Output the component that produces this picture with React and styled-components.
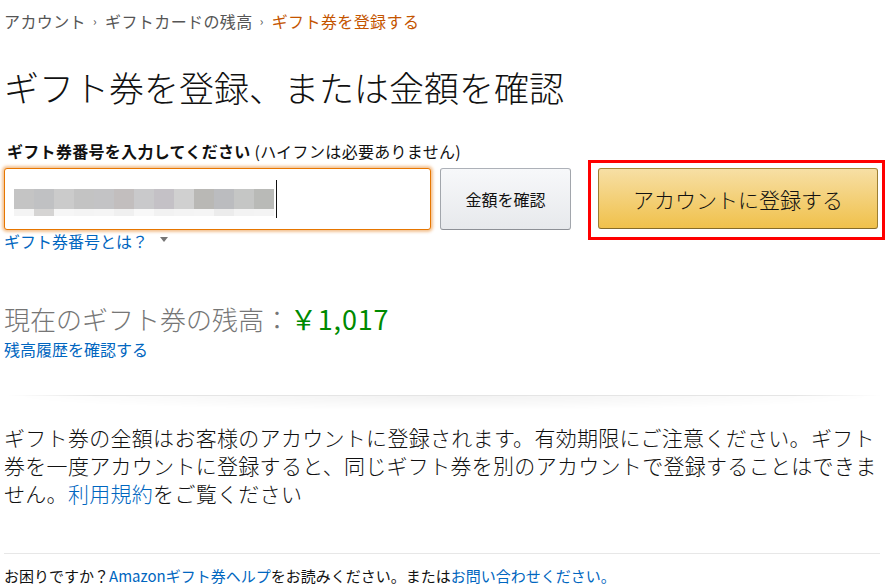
import React from "react";
import styled, { createGlobalStyle } from "styled-components";

const GlobalStyle = createGlobalStyle`
	body {
		margin: 0;
		background: #fff;
		font-family: "Noto Sans CJK JP", "Noto Sans", sans-serif;
		color: #111;
	}
`;

const breadcrumbs = [
	{ name: "アカウント" },
	{ name: "ギフトカードの残高" },
	{ name: "ギフト券を登録する", active: true },
];

const blurBlocks = [
	["#c4c4c4", "#f4f4f4"],
	["#c0c1c3", "#d5d4d3"],
	["#cbcbcb", "#f6f6f6"],
	["#c3c3c3", "#f4f4f4"],
	["#c3c3c5", "#f5f5f5"],
	["#c2bebe", "#f0f0f0"],
	["#c9c9cb", "#f8f8f8"],
	["#c4c1c6", "#f2f2f2"],
	["#d0d0d0", "#f4f4f4"],
	["#b9b8b5", "#f5f5f5"],
	["#bbbcbf", "#ececec"],
	["#c5c6c5", "#f3f3f3"],
	["#b9bab7", "#f4f4f4"],
];

const App = () => {
	return (
		<>
			<GlobalStyle />
			<StyledPage>
				<StyledBreadcrumbs>
					{breadcrumbs.map((item, i) => (
						<React.Fragment key={item.name}>
							{i > 0 && <StyledCrumbSep>›</StyledCrumbSep>}
							<StyledCrumb $active={item.active}>{item.name}</StyledCrumb>
						</React.Fragment>
					))}
				</StyledBreadcrumbs>

				<StyledTitle>ギフト券を登録、または金額を確認</StyledTitle>

				<StyledLabel>
					<b>ギフト券番号を入力してください</b> (ハイフンは必要ありません)
				</StyledLabel>

				<StyledFormRow>
					<StyledInputBox>
						<StyledBlur>
							{blurBlocks.map(([top, bottom], i) => (
								<StyledBlurCell key={i}>
									<StyledBlurTop $color={top} />
									<StyledBlurBottom $color={bottom} />
								</StyledBlurCell>
							))}
						</StyledBlur>
						<StyledCaret />
					</StyledInputBox>
					<StyledCheckButton>金額を確認</StyledCheckButton>
					<StyledHighlight>
						<StyledPrimaryButton>アカウントに登録する</StyledPrimaryButton>
					</StyledHighlight>
				</StyledFormRow>

				<StyledHelpLink>
					<StyledLink>ギフト券番号とは？</StyledLink>
					<StyledCaretDown />
				</StyledHelpLink>

				<StyledBalance>
					現在のギフト券の残高：<StyledAmount>￥1,017</StyledAmount>
				</StyledBalance>
				<StyledHistoryLink>残高履歴を確認する</StyledHistoryLink>

				<StyledSectionDivider />

				<StyledNotice>
					ギフト券の全額はお客様のアカウントに登録されます。有効期限にご注意ください。ギフト券を一度アカウントに登録すると、同じギフト券を別のアカウントで登録することはできません。<StyledLink>利用規約</StyledLink>をご覧ください
				</StyledNotice>

				<StyledRule />

				<StyledFooterText>
					お困りですか？<StyledLink>Amazonギフト券ヘルプ</StyledLink>
					をお読みください。または<StyledLink>お問い合わせください。</StyledLink>
				</StyledFooterText>
			</StyledPage>
		</>
	);
};

const StyledPage = styled.div`
	width: 889px;
	padding: 9px 4px 0 4px;
	box-sizing: border-box;
`;

const StyledBreadcrumbs = styled.div`
	display: flex;
	align-items: center;
	font-size: 16px;
	letter-spacing: 0.4px;
	line-height: 24px;
`;

const StyledCrumb = styled.span`
	color: ${({ $active }) => ($active ? "#c45500" : "#555")};
`;

const StyledCrumbSep = styled.span`
	color: #555;
	font-size: 12px;
	margin: 0 8px 0 7px;
`;

const StyledTitle = styled.h1`
	margin: 32px 0 0 0;
	font-size: 35px;
	font-weight: 300;
	line-height: 44px;
	color: #111;
`;

const StyledLabel = styled.div`
	margin: 31px 0 0 3px;
	font-size: 16px;
	letter-spacing: 0.3px;
	line-height: 22px;
	b {
		font-weight: 700;
	}
`;

const StyledFormRow = styled.div`
	display: flex;
	align-items: flex-start;
	margin: 6px 0 0 0;
`;

const StyledInputBox = styled.div`
	width: 428px;
	height: 62px;
	box-sizing: border-box;
	border: 1px solid #e77600;
	border-radius: 3px;
	box-shadow: 0 0 3px 2px rgba(228, 121, 17, 0.45);
	display: flex;
	align-items: center;
	padding: 0 0 0 9px;
	background: #fff;
`;

const StyledBlur = styled.div`
	display: flex;
	height: 27px;
	margin: 6px 0 0 0;
`;

const StyledBlurCell = styled.div`
	width: 20px;
	display: flex;
	flex-direction: column;
`;

const StyledBlurTop = styled.div`
	height: 20px;
	background: ${({ $color }) => $color};
`;

const StyledBlurBottom = styled.div`
	height: 7px;
	background: ${({ $color }) => $color};
`;

const StyledCaret = styled.div`
	width: 1px;
	height: 38px;
	background: #111;
	margin: 0 0 0 2px;
`;

const StyledCheckButton = styled.button`
	width: 131px;
	height: 62px;
	margin: 0 0 0 9px;
	border: 1px solid #adb1b8;
	border-color: #adb1b8 #a2a6ac #8d9096;
	border-radius: 3px;
	background: linear-gradient(to bottom, #f7f8fa, #e7e9ec);
	font-family: inherit;
	font-size: 16px;
	color: #111;
	padding: 0;
`;

const StyledHighlight = styled.div`
	margin: -8px 0 -10px 17px;
	border: 3px solid #ff0000;
	padding: 5px 4px 8px 7px;
`;

const StyledPrimaryButton = styled.button`
	display: block;
	width: 280px;
	height: 61px;
	border: 1px solid #a88734;
	border-color: #a88734 #9c7e31 #846a29;
	border-radius: 3px;
	background: linear-gradient(to bottom, #f7dfa5, #f0c14b);
	font-family: inherit;
	font-size: 21px;
	font-weight: 300;
	color: #111;
	padding: 0;
`;

const StyledHelpLink = styled.div`
	display: flex;
	align-items: center;
	font-size: 16px;
	line-height: 22px;
`;

const StyledLink = styled.span`
	color: #0066c0;
`;

const StyledCaretDown = styled.span`
	width: 0;
	height: 0;
	margin: 0 0 4px 12px;
	border-left: 4px solid transparent;
	border-right: 4px solid transparent;
	border-top: 5px solid #767676;
`;

const StyledBalance = styled.div`
	margin: 49px 0 0 0;
	font-size: 26px;
	font-weight: 300;
	line-height: 36px;
	color: #767676;
`;

const StyledAmount = styled.span`
	color: #008a00;
	font-size: 27px;
	font-weight: 400;
	letter-spacing: 0.8px;
`;

const StyledHistoryLink = styled.div`
	font-size: 16px;
	line-height: 22px;
	color: #0066c0;
	margin: 1px 0 0 0;
`;

const StyledSectionDivider = styled.div`
	margin: 35px 4px 0 4px;
	height: 14px;
	border-top: 1px solid transparent;
	border-image: linear-gradient(
			to right,
			rgba(0, 0, 0, 0),
			rgba(0, 0, 0, 0.1) 10%,
			rgba(0, 0, 0, 0.1) 90%,
			rgba(0, 0, 0, 0)
		)
		1;
	background: radial-gradient(
		ellipse 50% 100% at 50% 0,
		rgba(0, 0, 0, 0.05),
		rgba(0, 0, 0, 0) 100%
	);
`;

const StyledNotice = styled.p`
	margin: 13px 0 0 0;
	width: 876px;
	font-size: 21px;
	font-weight: 300;
	letter-spacing: 0.3px;
	line-height: 28px;
	color: #111;
`;

const StyledRule = styled.hr`
	margin: 46px 5px 0 0;
	border: 0;
	border-top: 1px solid #e7e7e7;
`;

const StyledFooterText = styled.div`
	margin: 12px 0 0 0;
	font-size: 15px;
	line-height: 20px;
	color: #111;
`;

export default App;
